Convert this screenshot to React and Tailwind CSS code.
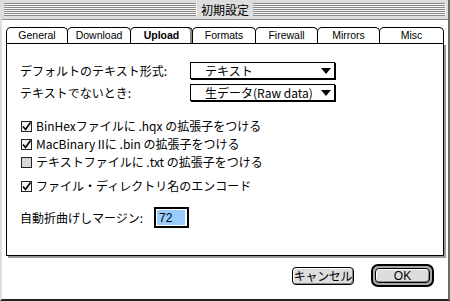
import React from "react";

const tabs = [
  { label: "General", w: "w-[62px]" },
  { label: "Download", w: "w-[64px]" },
  { label: "Upload", w: "w-[63px]", active: true },
  { label: "Formats", w: "w-[64px]" },
  { label: "Firewall", w: "w-[63px]" },
  { label: "Mirrors", w: "w-[63px]" },
  { label: "Misc", w: "w-[65px]" },
];

const checks = [
  { label: "BinHexファイルに .hqx の拡張子をつける", on: true },
  { label: "MacBinary IIに .bin の拡張子をつける", on: true },
  { label: "テキストファイルに .txt の拡張子をつける", on: false },
];

const jp = "font-['Noto_Sans_CJK_JP','Noto_Sans',sans-serif]";
const latin = "font-['Liberation_Sans','Noto_Sans_CJK_JP',sans-serif]";

const Stripes = () => (
  <div className="flex-1 h-[13px] bg-[repeating-linear-gradient(to_bottom,#8a8a8a_0px,#8a8a8a_1px,#f4f4f4_1px,#f4f4f4_2px)] border-r border-r-[#f4f4f4]" />
);

const Popup = ({ value }) => (
  <div className="w-[145px] h-[17px] border border-black bg-white shadow-[1px_1px_0_#000] flex items-center pl-[14px] pr-[3px]">
    <span className={`${jp} text-[12px] leading-none text-black flex-1 whitespace-nowrap`}>{value}</span>
    <svg width="10" height="6" viewBox="0 0 10 6">
      <polygon points="0,0 10,0 5,6" fill="#000" />
    </svg>
  </div>
);

const CheckRow = ({ label, on, className = "" }) => (
  <div className={`flex items-center h-[18px] shrink-0 ${className}`}>
    <div className={`w-[11px] h-[11px] border border-[#222] ml-[1px] mr-[4px] flex items-center justify-center ${on ? "bg-[#f2f2f2]" : "bg-[#d8d8d8]"}`}>
      {on && (
        <svg width="9" height="9" viewBox="0 0 9 9">
          <path d="M1 4.5 L3.5 7.5 L8.5 0.5" stroke="#000" strokeWidth="1.6" fill="none" />
        </svg>
      )}
    </div>
    <span className={`${jp} text-[12px] leading-none text-black whitespace-nowrap`}>{label}</span>
  </div>
);

export default function App() {
  return (
    <div className="w-[450px] h-[301px] bg-white flex flex-col border-l-2 border-l-[#dcdcdc] border-r-2 border-r-[#6a6a6a] border-b-2 border-b-[#222] overflow-hidden">
      {/* title bar */}
      <div className="h-[20px] bg-[#dddddd] border-b border-b-[#8a8a8a] flex items-center px-[2px]">
        <Stripes />
        <span className={`${jp} text-[12px] leading-none text-black px-[4px]`}>初期設定</span>
        <Stripes />
      </div>

      <div className="flex-1 flex flex-col pt-[7px] pl-[4px]">
        {/* tabs */}
        <div className="flex h-[16px]">
          {tabs.map((t, i) => (
            <div
              key={t.label}
              className={`${t.w} ${i > 0 ? "-ml-px" : ""} h-[16px] border-t border-l border-r border-black rounded-t-[5px] flex items-center justify-center bg-white ${t.active ? "shadow-[inset_-2px_0_0_#8a8a8a]" : ""}`}
            >
              <span className={`${latin} text-[10.5px] leading-none text-black ${t.active ? "font-bold" : ""}`}>{t.label}</span>
            </div>
          ))}
        </div>

        {/* panel */}
        <div className="w-[438px] h-[213px] border border-black shadow-[2px_2px_0_#9a9a9a] flex flex-col pl-[13px]">
          <div className="flex items-center mt-[18px]">
            <span className={`${jp} text-[12px] leading-none text-black w-[170px]`}>デフォルトのテキスト形式:</span>
            <Popup value="テキスト" />
          </div>
          <div className="flex items-center mt-[5px]">
            <span className={`${jp} text-[12px] leading-none text-black w-[170px]`}>テキストでないとき:</span>
            <Popup value="生データ(Raw data)" />
          </div>

          <div className="flex flex-col mt-[16px]">
            {checks.map((c) => (
              <CheckRow key={c.label} label={c.label} on={c.on} />
            ))}
          </div>
          <CheckRow className="mt-[6px]" label="ファイル・ディレクトリ名のエンコード" on />

          <div className="flex items-center mt-[12px]">
            <span className={`${jp} text-[12px] leading-none text-black mr-[11px]`}>自動折曲げしマージン:</span>
            <div className="w-[35px] h-[21px] border-2 border-black p-[1px] bg-white">
              <div className="w-[28px] h-[15px] bg-[#99ccff] flex items-center pl-[2px]">
                <span className={`${latin} text-[12px] leading-none text-black`}>72</span>
              </div>
            </div>
          </div>
        </div>

        {/* buttons */}
        <div className="flex items-center justify-end mt-[8px] pr-[14px] gap-[17px]">
          <div className="w-[62px] h-[18px] rounded-[4px] border border-black bg-[#dddddd] shadow-[inset_-1px_-1px_0_#888,inset_1px_1px_0_#fff] flex items-center justify-center">
            <span className={`${jp} text-[12px] leading-none text-black whitespace-nowrap tracking-[-0.3px]`}>キャンセル</span>
          </div>
          <div className="w-[63px] h-[23px] rounded-[7px] border-2 border-black bg-[#a8a8a8] p-[2px] flex">
            <div className="flex-1 rounded-[4px] border border-black bg-[#dddddd] shadow-[inset_-1px_-1px_0_#888,inset_1px_1px_0_#fff] flex items-center justify-center">
              <span className={`${latin} text-[12px] leading-none text-black`}>OK</span>
            </div>
          </div>
        </div>
      </div>
    </div>
  );
}
